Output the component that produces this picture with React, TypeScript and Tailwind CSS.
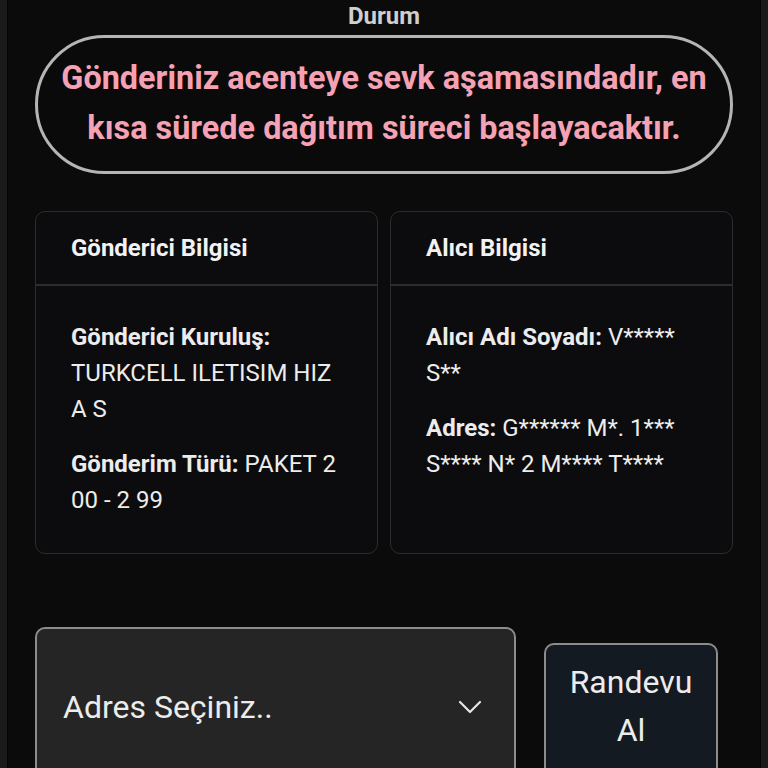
import React from "react";

const InfoCard = ({ title, children }: { title: string; children: React.ReactNode }) => (
	<div className="flex-1 rounded-[10px] border border-[#2c2c2c] bg-[#0c0c0e]">
		<div className="h-[74px] flex items-center px-[35px] border-b-2 border-[#2e2e2e]">
			<h3 className="text-[24px] font-bold text-[#f2f2f2]">{title}</h3>
		</div>
		<div className="px-[35px] pt-[33px] pb-[30px] text-[24px] leading-[36px] text-[#ececec] flex flex-col gap-[19px]">
			{children}
		</div>
	</div>
);

export default function App() {
	return (
		<div className="h-[768px] overflow-hidden bg-[#1b1b1b] font-['Roboto',sans-serif]">
			<div className="mx-[7px] h-full bg-[#0b0b0b] border-x border-[#050505] px-[27px]">
				<h2 className="text-center text-[24px] font-bold text-[#cfcfcf] leading-[26px] pt-[3px]">Durum</h2>

				<div className="mt-[6px] h-[139px] rounded-full border-[3px] border-[#b5b5b5] bg-[#0a0a0a] flex items-center justify-center pb-[3px]">
					<p className="text-center text-[32.4px] font-bold leading-[50px] text-[#f5a2b4] px-[14px]">
						Gönderiniz acenteye sevk aşamasındadır, en kısa sürede dağıtım süreci başlayacaktır.
					</p>
				</div>

				<div className="mt-[37px] flex gap-[12px] h-[343px]">
					<InfoCard title="Gönderici Bilgisi">
						<p>
							<span className="font-bold">Gönderici Kuruluş:</span> TURKCELL ILETISIM HIZ A S
						</p>
						<p>
							<span className="font-bold">Gönderim Türü:</span> PAKET 2 00 - 2 99
						</p>
					</InfoCard>
					<InfoCard title="Alıcı Bilgisi">
						<p>
							<span className="font-bold">Alıcı Adı Soyadı:</span> V***** S**
						</p>
						<p>
							<span className="font-bold">Adres:</span> G****** M*. 1*** S**** N* 2 M**** T****
						</p>
					</InfoCard>
				</div>

				<div className="mt-[73px] flex items-start gap-[28px]">
					<div className="w-[481px] h-[170px] shrink-0 rounded-[10px] border-2 border-[#8c8c8c] bg-[#252525] flex items-center justify-between pl-[26px] pr-[32px] pb-[10px]">
						<span className="text-[32px] text-[#ececec]">Adres Seçiniz..</span>
						<svg width="24" height="14" viewBox="0 0 24 14" fill="none" stroke="#e6e6e6" strokeWidth="2.2" strokeLinecap="round" strokeLinejoin="round">
							<path d="M2 2l10 10 10-10" />
						</svg>
					</div>
					<button className="mt-[16px] w-[174px] h-[140px] shrink-0 rounded-[10px] border-2 border-[#8c8c8c] bg-[#141a22] text-[32px] leading-[48px] text-[#ececec] pb-[14px]">
						Randevu
						<br />
						Al
					</button>
				</div>
			</div>
		</div>
	);
}
